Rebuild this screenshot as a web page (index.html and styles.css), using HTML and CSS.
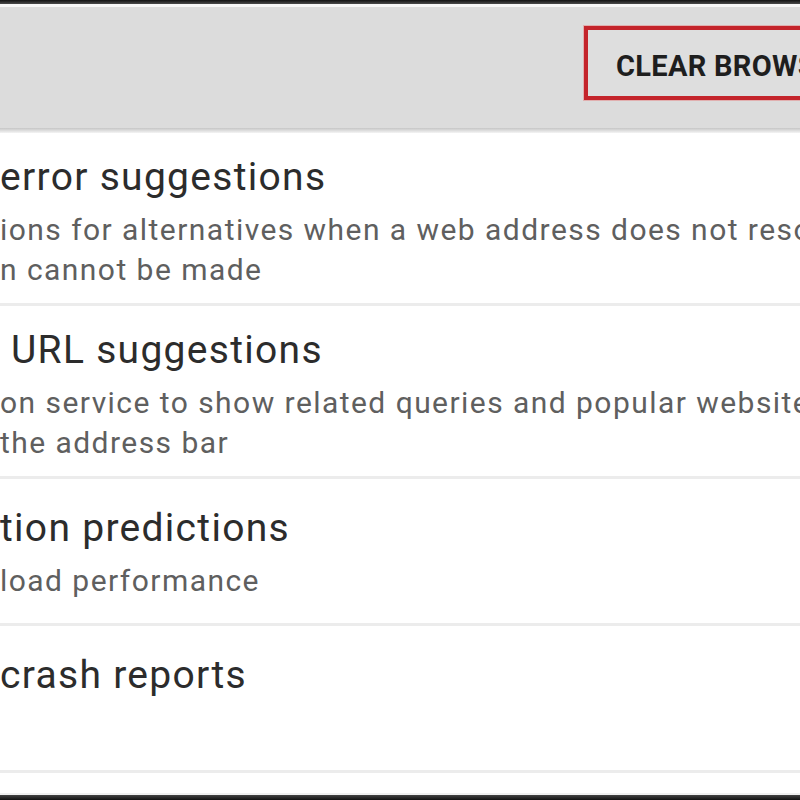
FILE: index.html
```html
<!DOCTYPE html>
<html lang="en">
<head>
    <meta charset="UTF-8">
    <meta name="viewport" content="width=device-width, initial-scale=1.0">
    <title>Privacy</title>
    <link rel="stylesheet" href="styles.css">
</head>
<body>
    <div class="screen">
        <div class="status-edge"></div>

        <!-- Action bar -->
        <header class="action-bar">
            <button class="clear-btn">CLEAR BROWSING DATA</button>
        </header>
        <div class="bar-shadow"></div>

        <!-- Preference list -->
        <ul class="prefs">
            <li class="pref">
                <div class="pref-title">error suggestions</div>
                <div class="pref-summary">ions for alternatives when a web address does not resolve or a</div>
                <div class="pref-summary">n cannot be made</div>
            </li>
            <li class="pref">
                <div class="pref-title">&nbsp;URL suggestions</div>
                <div class="pref-summary">on service to show related queries and popular websites as you type in</div>
                <div class="pref-summary">the address bar</div>
            </li>
            <li class="pref pref-short">
                <div class="pref-title">tion predictions</div>
                <div class="pref-summary">load performance</div>
            </li>
            <li class="pref pref-short">
                <div class="pref-title">crash reports</div>
            </li>
        </ul>

        <div class="bottom-edge"></div>
    </div>
</body>
</html>
```

FILE: styles.css
```css
html, body {
    margin: 0;
    padding: 0;
    background: #ffffff;
}
body {
    font-family: Roboto, "Noto Sans", sans-serif;
    width: 800px;
    height: 800px;
    overflow: hidden;
}
.screen {
    display: flex;
    flex-direction: column;
    height: 800px;
    overflow: hidden;
}
.status-edge {
    height: 4px;
    background: linear-gradient(#111, #4a4a4a);
    border-bottom: 3px solid #f6f6f6;
}
.action-bar {
    height: 121px;
    background: #dcdcdc;
    display: flex;
    justify-content: flex-end;
    align-items: flex-start;
    padding-top: 19px;
    box-sizing: border-box;
}
.bar-shadow {
    height: 5px;
    background: linear-gradient(#c6c6c6, #f4f4f4);
}
.clear-btn {
    margin-right: -200px;
    width: 416px;
    height: 74px;
    padding: 5px 0 0 28px;
    text-align: left;
    white-space: nowrap;
    overflow: hidden;
    background: #dedede;
    border: 4px solid #c4242b;
    box-shadow: 0 0 0 1px rgba(230, 120, 120, 0.45);
    font-family: Roboto, sans-serif;
    font-weight: bold;
    font-size: 29px;
    letter-spacing: 0.3px;
    color: #1e1e1e;
}
.prefs {
    list-style: none;
    margin: 0;
    padding: 0;
    flex: 1;
}
.pref {
    padding: 20px 0 13px 0;
    min-height: 113px;
    border-bottom: 3px solid #ececec;
    white-space: nowrap;
    overflow: hidden;
}
.pref-short {
    padding-top: 25px;
    min-height: 106px;
}
.pref-title {
    font-size: 39px;
    line-height: 48px;
    letter-spacing: 1.3px;
    color: #2c2c2c;
    margin-bottom: 9px;
}
.pref-summary {
    font-size: 30px;
    line-height: 40px;
    letter-spacing: 1.45px;
    color: #5f5f5f;
}
.bottom-edge {
    height: 5px;
    border-top: 2px solid #f0f0f0;
    background: linear-gradient(#444, #111);
}
```
